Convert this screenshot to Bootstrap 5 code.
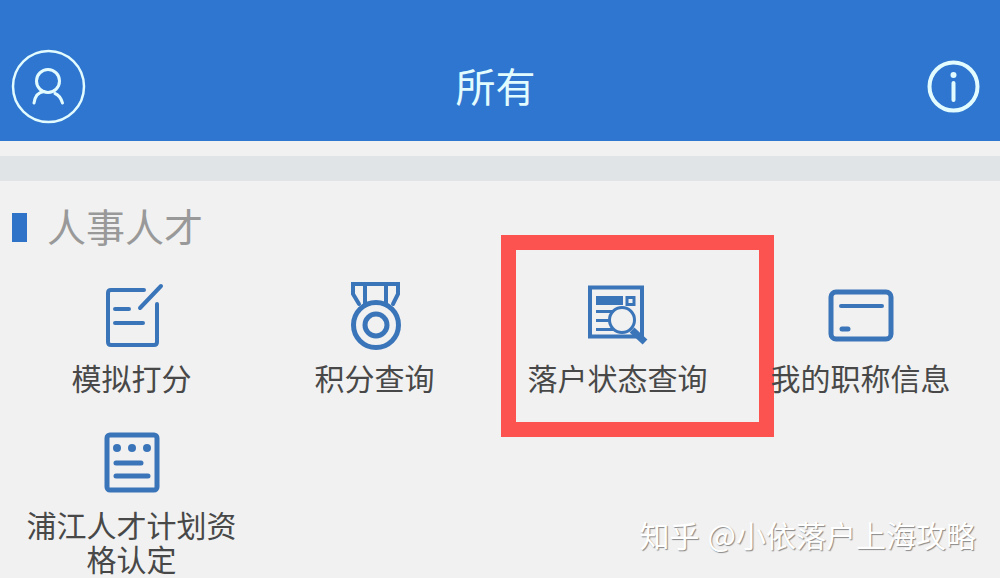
<!DOCTYPE html>
<html lang="zh-CN">
<head>
<meta charset="utf-8">
<meta name="viewport" content="width=device-width, initial-scale=1">
<title>所有</title>
<link href="https://cdn.jsdelivr.net/npm/bootstrap@5.3.0/dist/css/bootstrap.min.css" rel="stylesheet">
<style>
  body { background: #f1f1f1; font-family: "Noto Sans CJK SC", sans-serif; color: #484848; }
  svg { display: block; fill: none; stroke: currentColor; stroke-linecap: round; stroke-linejoin: round; }
  .app-bar { background: #2e76cf; color: #e2fbff; padding: 32px 20px 0 11px; height: 141px; }
  .app-bar h1 { font-size: 40px; line-height: 60px; font-weight: 400; }
  .bar-side { flex: 1 1 0; }
  .icon-button { background: none; border: 0; padding: 0; color: inherit; }
  .divider-band { margin-top: 15px; height: 25px; background: #e1e4e7; }
  .section-title { padding: 20px 12px 0; gap: 20px; }
  .section-title h2 { font-size: 39px; line-height: 48px; font-weight: 400; color: #999; }
  .section-mark { width: 15px; height: 29px; background: #2e73c8; }
  .service-grid { display: grid; grid-template-columns: repeat(4, 1fr); row-gap: 33px; padding: 27px 18px 0 10px; }
  .service { color: #3b75b9; gap: 10px; }
  .service-label { font-size: 30px; line-height: 34px; color: #484848; max-width: 220px; text-align: center; }
  .service-label.one-line { white-space: nowrap; }
  .highlight-frame { left: 5px; top: -45px; width: 273px; height: 202px; border: 15px solid #fc5350; pointer-events: none; }
  .boxy { stroke-linecap: butt; stroke-linejoin: miter; }
  .watermark { right: 24px; bottom: 22px; font-size: 30px; line-height: 44px; color: #fff; text-shadow: 1px 1px 1px #888; gap: 8px; }
</style>
</head>
<body>
<div class="position-relative min-vh-100 overflow-hidden">
  <header class="app-bar d-flex align-items-center">
    <div class="bar-side d-flex">
      <button class="icon-button" type="button" aria-label="个人中心">
        <svg width="75" height="75" viewBox="0 0 75 75" stroke-width="2.5">
          <circle cx="37.5" cy="37.5" r="35.5"/>
          <circle cx="37" cy="32" r="11.5" stroke-width="3"/>
          <path d="M23 54C24 47 28 43 33 42.500M44 44.500C48 46 50 49 51.500 54" stroke-width="3"/>
        </svg>
      </button>
    </div>
    <h1 class="mb-1">所有</h1>
    <div class="bar-side d-flex justify-content-end">
      <button class="icon-button" type="button" aria-label="信息">
        <svg width="53" height="53" viewBox="0 0 53 53" stroke-width="4">
          <circle cx="26.500" cy="26.500" r="24"/>
          <circle cx="26.500" cy="15" r="3" fill="currentColor" stroke="none"/>
          <path d="M26.500 23V40"/>
        </svg>
      </button>
    </div>
  </header>
  <div class="divider-band"></div>

  <main>
    <div class="section-title d-flex align-items-center">
      <span class="section-mark"></span>
      <h2 class="mb-1">人事人才</h2>
    </div>
    <nav class="service-grid" aria-label="人事人才">
      <a href="#" class="service position-relative d-flex flex-column align-items-center text-decoration-none">
        <svg width="70" height="70" viewBox="0 0 70 70" stroke-width="4">
          <path d="M47 10H14Q11 10 11 13V62Q11 65 14 65H57Q60 65 60 62V24"/>
          <path d="M43 28L64 6M18 29H32M18 43H46"/>
        </svg>
        <span class="service-label one-line">模拟打分</span>
      </a>
      <a href="#" class="service position-relative d-flex flex-column align-items-center text-decoration-none">
        <svg width="70" height="70" viewBox="0 0 70 70" stroke-width="4">
          <path d="M19 24L13 14V4H58V14L53 24M25 4V24M46 4V24" stroke-linejoin="miter"/>
          <circle cx="36" cy="45" r="22.500" stroke-width="5"/>
          <circle cx="36" cy="45" r="11" stroke-width="5"/>
        </svg>
        <span class="service-label one-line">积分查询</span>
      </a>
      <a href="#" class="service position-relative d-flex flex-column align-items-center text-decoration-none">
        <svg class="boxy" width="70" height="70" viewBox="0 0 70 70" stroke-width="3">
          <rect x="7" y="7.500" width="52" height="49" stroke-width="4"/>
          <path d="M13 20.500H40" stroke-width="9"/>
          <rect x="44" y="17.500" width="7" height="7"/>
          <path d="M13 31.500H30M13 40.500H28M13 49.500H30"/>
          <circle cx="39" cy="40" r="12.500" fill="#f1f1f1"/>
          <path d="M49 50L62 62" stroke-width="7"/>
        </svg>
        <span class="service-label one-line">落户状态查询</span>
        <span class="highlight-frame position-absolute"></span>
      </a>
      <a href="#" class="service position-relative d-flex flex-column align-items-center text-decoration-none">
        <svg width="70" height="70" viewBox="0 0 70 70" stroke-width="4">
          <rect x="5" y="12" width="60" height="47" rx="5" stroke-width="5"/>
          <path d="M15 26H56"/>
          <path d="M16 49H22" stroke-width="5"/>
        </svg>
        <span class="service-label one-line">我的职称信息</span>
      </a>
      <a href="#" class="service position-relative d-flex flex-column align-items-center text-decoration-none">
        <svg width="70" height="70" viewBox="0 0 70 70" stroke-width="4">
          <rect x="10" y="8" width="50" height="55" rx="3" stroke-width="5"/>
          <g fill="currentColor" stroke="none"><circle cx="20" cy="21" r="4"/><circle cx="35" cy="21" r="4"/><circle cx="50" cy="21" r="4"/></g>
          <path d="M19 36H44M19 49H51" stroke-width="5"/>
        </svg>
        <span class="service-label">浦江人才计划资格认定</span>
      </a>
    </nav>
  </main>

  <div class="watermark position-absolute d-flex"><span>知乎</span><span>@小依落户上海攻略</span></div>
</div>
<script src="https://cdn.jsdelivr.net/npm/bootstrap@5.3.0/dist/js/bootstrap.bundle.min.js"></script>
</body>
</html>
